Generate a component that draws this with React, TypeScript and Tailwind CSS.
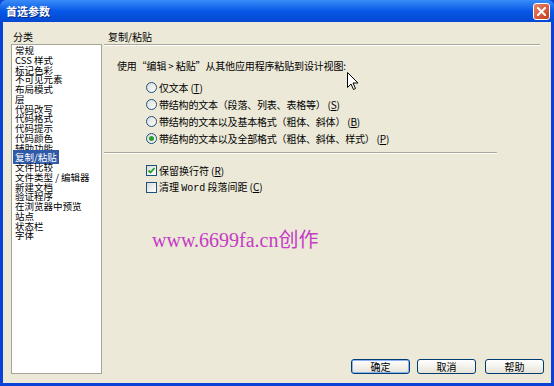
const categories = [
  "常规",
  "CSS 样式",
  "标记色彩",
  "不可见元素",
  "布局模式",
  "层",
  "代码改写",
  "代码格式",
  "代码提示",
  "代码颜色",
  "辅助功能",
  "复制/粘贴",
  "文件比较",
  "文件类型 / 编辑器",
  "新建文档",
  "验证程序",
  "在浏览器中预览",
  "站点",
  "状态栏",
  "字体",
];

const pasteOptions = [
  { label: "仅文本", key: "T", checked: false },
  { label: "带结构的文本（段落、列表、表格等）", key: "S", checked: false },
  { label: "带结构的文本以及基本格式（粗体、斜体）", key: "B", checked: false },
  { label: "带结构的文本以及全部格式（粗体、斜体、样式）", key: "P", checked: true },
];

function Radio({ checked }: { checked: boolean }) {
  return (
    <span className="relative flex h-[11px] w-[11px] shrink-0 items-center justify-center rounded-full border border-[#1c5180] bg-gradient-to-br from-[#dcdcd7] to-white">
      {checked && <span className="h-[5px] w-[5px] rounded-full bg-[#2c9f2c]" />}
    </span>
  );
}

function Checkbox({ checked }: { checked: boolean }) {
  return (
    <span className="flex h-[11px] w-[11px] shrink-0 items-center justify-center border border-[#1c5180] bg-gradient-to-br from-[#dcdcd7] to-white">
      {checked && (
        <svg width="9" height="9" viewBox="0 0 9 9">
          <path d="M1.5 4.5 L3.5 6.5 L7.5 2" fill="none" stroke="#21a121" strokeWidth="1.8" />
        </svg>
      )}
    </span>
  );
}

function Key({ k }: { k: string }) {
  return (
    <span className="ml-[2px]">
      (<span className="underline">{k}</span>)
    </span>
  );
}

function XpButton({ label, primary }: { label: string; primary?: boolean }) {
  return (
    <div
      className={
        "flex h-[15px] w-[59px] items-center justify-center rounded-[3px] border border-[#003c74] bg-gradient-to-b from-white to-[#e6e4d8] text-[10px] leading-none text-black " +
        (primary ? "shadow-[inset_0_0_0_1px_#8cb4f2]" : "")
      }
    >
      {label}
    </div>
  );
}

function Cursor() {
  return (
    <svg className="absolute left-[347px] top-[72px]" width="12" height="19" viewBox="0 0 12 19">
      <path
        d="M0.5 0.5 L0.5 15.5 L4 12 L6.5 17.5 L8.5 16.5 L6 11 L11 11 Z"
        fill="white"
        stroke="black"
        strokeWidth="1"
        strokeLinejoin="round"
      />
    </svg>
  );
}

export default function App() {
  return (
    <div
      className="relative flex h-[386px] w-[554px] flex-col overflow-hidden bg-[#0842d6] text-black"
      style={{ fontFamily: '"Noto Sans CJK SC", "Noto Sans", sans-serif' }}
    >
      {/* Title bar */}
      <div className="flex h-[22px] shrink-0 items-center rounded-t-[6px] bg-gradient-to-b from-[#3a8cf8] via-[#0758e6] to-[#0348d2] pl-[6px] pr-[4px]">
        <span className="text-[11px] font-bold leading-none text-white [text-shadow:1px_1px_0_#0a2a80]">
          首选参数
        </span>
        <div className="ml-auto flex h-[17px] w-[17px] items-center justify-center rounded-[3px] border border-white bg-gradient-to-br from-[#e9846a] to-[#c33a12]">
          <svg width="9" height="9" viewBox="0 0 9 9">
            <path d="M1 1 L8 8 M8 1 L1 8" stroke="white" strokeWidth="2" strokeLinecap="square" />
          </svg>
        </div>
      </div>

      {/* Body */}
      <div className="mx-[3px] mb-[3px] flex flex-1 bg-[#ece9d8] pt-[9px]">
        {/* Category list */}
        <div className="ml-[8px] flex w-[91px] shrink-0 flex-col pb-[9px]">
          <div className="h-[13px] pl-[2px] text-[10px] leading-[12px]">分类</div>
          <div className="flex-1 border border-[#a5a39a] bg-white pl-[3px] pt-[1px] text-[9.5px] leading-[9.75px]">
            {categories.map((c) => (
              <div key={c} className="h-[9.75px] whitespace-pre">
                {c === "复制/粘贴" ? (
                  <span className="-ml-[2px] bg-[#2f5aa8] px-[2px] text-white">{c}</span>
                ) : (
                  c
                )}
              </div>
            ))}
          </div>
        </div>

        {/* Settings panel */}
        <div className="ml-[2px] flex flex-1 flex-col pr-[3px] pb-[9px]">
          <div className="h-[13px] pl-[4px] text-[10px] leading-[12px]">复制/粘贴</div>
          <div className="mr-[8px] border-t border-b border-t-[#aca899] border-b-white" />

          <div className="mt-[14px] pl-[13px] text-[10px] leading-[12px] tracking-[-0.15px]">
            使用“编辑 &gt; 粘贴”从其他应用程序粘贴到设计视图:
          </div>

          <div className="mt-[7px] flex flex-col pl-[42px] text-[10px]">
            {pasteOptions.map((o) => (
              <div key={o.key} className="flex h-[17px] items-center gap-[2px]">
                <Radio checked={o.checked} />
                <span className="leading-none tracking-[-0.2px]">
                  {o.label}
                  <Key k={o.key} />
                </span>
              </div>
            ))}
          </div>

          <div className="mt-[5px] w-[393px] border-t border-b border-t-[#aca899] border-b-white" />

          <div className="mt-[8px] flex flex-col pl-[42px] text-[10px]">
            <div className="flex h-[17px] items-center gap-[2px]">
              <Checkbox checked />
              <span className="leading-none">
                保留换行符
                <Key k="R" />
              </span>
            </div>
            <div className="flex h-[17px] items-center gap-[2px]">
              <Checkbox checked={false} />
              <span className="leading-none">
                清理{" "}
                <span style={{ fontFamily: '"Liberation Mono", monospace' }}>Word</span> 段落间距
                <Key k="C" />
              </span>
            </div>
          </div>

          <div
            className="mt-[32px] pl-[48px] text-[20px] leading-[24px] text-[#c53cc5]"
            style={{ fontFamily: '"Liberation Serif", "Noto Sans CJK SC", serif' }}
          >
            www.6699fa.cn创作
          </div>

          <div className="mt-auto flex justify-end gap-[7px] pr-[4px]">
            <XpButton label="确定" primary />
            <XpButton label="取消" />
            <div className="ml-[2px]">
              <XpButton label="帮助" />
            </div>
          </div>
        </div>
      </div>

      <Cursor />
    </div>
  );
}
